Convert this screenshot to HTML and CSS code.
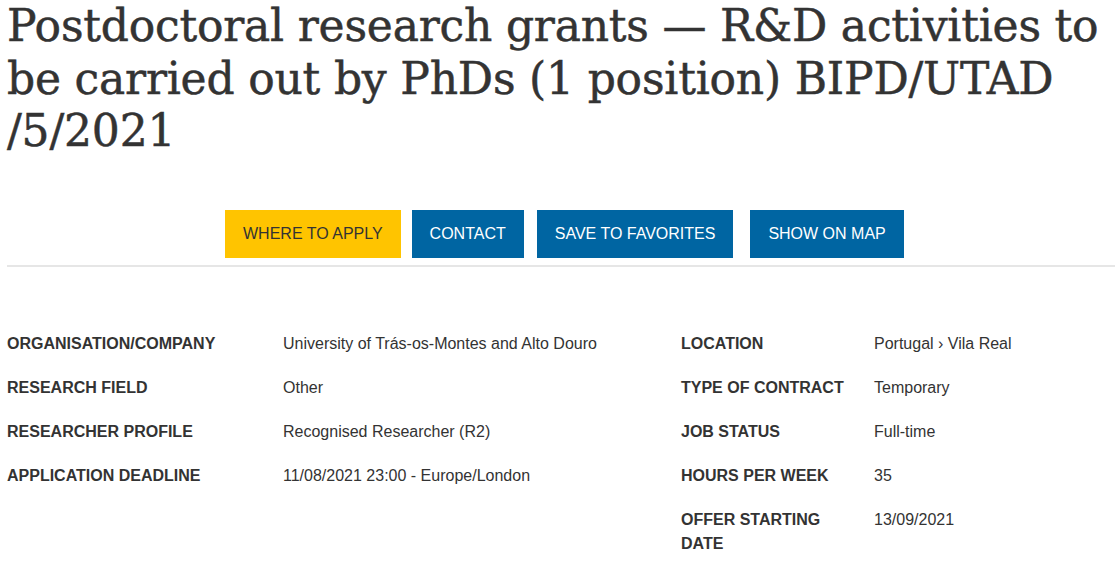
FILE: index.html
```html
<!DOCTYPE html>
<html lang="en">
<head>
<meta charset="utf-8">
<title>Postdoctoral research grants</title>
<link rel="stylesheet" href="styles.css">
</head>
<body>
<div class="page">
  <h1 class="title">Postdoctoral research grants — R&amp;D activities to<br>be carried out by PhDs (1 position) BIPD/UTAD<br>/5/2021</h1>

  <div class="actions">
    <a class="btn btn-apply" href="#">WHERE TO APPLY</a>
    <a class="btn btn-blue btn-contact" href="#">CONTACT</a>
    <a class="btn btn-blue btn-save" href="#">SAVE TO FAVORITES</a>
    <a class="btn btn-blue btn-map" href="#">SHOW ON MAP</a>
  </div>

  <div class="details">
    <dl class="info info-left">
      <dt>ORGANISATION/COMPANY</dt><dd>University of Trás-os-Montes and Alto Douro</dd>
      <dt>RESEARCH FIELD</dt><dd>Other</dd>
      <dt>RESEARCHER PROFILE</dt><dd>Recognised Researcher (R2)</dd>
      <dt>APPLICATION DEADLINE</dt><dd>11/08/2021 23:00 - Europe/London</dd>
    </dl>
    <dl class="info info-right">
      <dt>LOCATION</dt><dd>Portugal › Vila Real</dd>
      <dt>TYPE OF CONTRACT</dt><dd>Temporary</dd>
      <dt>JOB STATUS</dt><dd>Full-time</dd>
      <dt>HOURS PER WEEK</dt><dd>35</dd>
      <dt>OFFER STARTING DATE</dt><dd>13/09/2021</dd>
    </dl>
  </div>
</div>
</body>
</html>
```

FILE: styles.css
```css
html, body {
  margin: 0;
  padding: 0;
  background: #ffffff;
}

.page {
  padding-left: 7px;
  color: #333333;
  font-family: "Liberation Sans", Arial, sans-serif;
}

.title {
  margin: 0;
  padding-top: 0;
  font-family: "DejaVu Serif", "Liberation Serif", serif;
  font-weight: normal;
  font-size: 44px;
  line-height: 52.5px;
  letter-spacing: -0.2px;
  color: #333333;
  -webkit-text-stroke: 0.5px #333333;
  white-space: nowrap;
}

.actions {
  display: flex;
  justify-content: flex-start;
  padding-left: 218px;
  margin-top: 52px;
  padding-bottom: 7px;
  border-bottom: 2px solid #e6e6e6;
}

.btn {
  display: block;
  height: 48px;
  line-height: 48px;
  padding: 0 18px;
  font-size: 16px;
  text-decoration: none;
  color: #ffffff;
}

.btn-apply {
  background: #ffc400;
  color: #333333;
}

.btn-blue {
  background: #0065a2;
}

.btn-contact { margin-left: 11px; }
.btn-save { margin-left: 13px; }
.btn-map { margin-left: 17px; }

.details {
  display: flex;
  margin-top: 55px;
}

.info {
  margin: 0;
  display: grid;
  align-content: start;
  font-size: 16px;
  line-height: 24px;
}

.info dt,
.info dd {
  margin: 0;
  padding: 10px 0;
}

.info dt {
  font-weight: bold;
}

.info-left {
  width: 674px;
  grid-template-columns: 276px 1fr;
}

.info-right {
  flex: 1;
  grid-template-columns: 193px 1fr;
}

.info-right dt {
  padding-right: 20px;
}
```
